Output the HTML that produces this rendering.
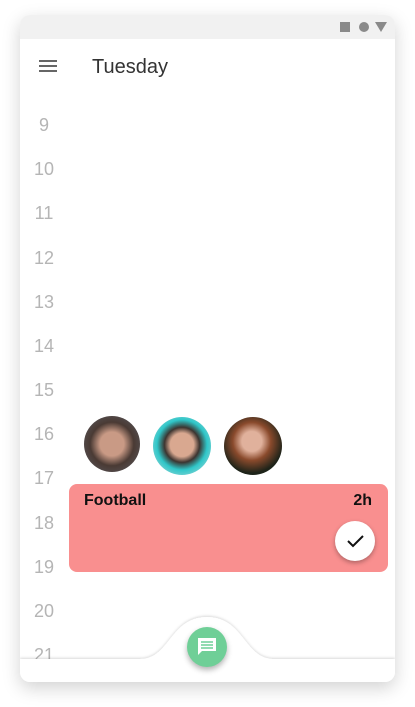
<!DOCTYPE html>
<html><head><style>
body{margin:0;width:415px;height:707px;background:#fff;font-family:"Liberation Sans",sans-serif;position:relative;overflow:hidden}
.frame{position:absolute;left:20px;top:15px;width:375px;height:667px;background:#fff;border-radius:10px;box-shadow:0 6px 18px rgba(0,0,0,.18);overflow:hidden}
.sb{height:24px;background:#f1f1f1;position:relative}
.num{position:absolute;width:50px;text-align:center;left:-1px;color:#b5b5b5;font-size:18px}
.av{position:absolute;border-radius:50%;overflow:hidden}
</style></head><body>
<div class="frame">
<div class="sb">
<div style="position:absolute;left:320px;top:7px;width:10px;height:10px;background:#8a8a8a"></div>
<div style="position:absolute;left:339px;top:7px;width:10px;height:10px;border-radius:50%;background:#8a8a8a"></div>
<div style="position:absolute;left:355px;top:7px;width:0;height:0;border-left:6px solid transparent;border-right:6px solid transparent;border-top:10px solid #8a8a8a"></div>
</div>
<div style="position:absolute;left:19px;top:45px;width:18px;height:2px;background:#666;box-shadow:0 5px 0 #666,0 10px 0 #666"></div>
<div style="position:absolute;left:72px;top:41px;font-size:20px;color:#333">Tuesday</div>
<div class="num" style="top:100px">9</div>
<div class="num" style="top:144px">10</div>
<div class="num" style="top:188px">11</div>
<div class="num" style="top:233px">12</div>
<div class="num" style="top:277px">13</div>
<div class="num" style="top:321px">14</div>
<div class="num" style="top:365px">15</div>
<div class="num" style="top:409px">16</div>
<div class="num" style="top:453px">17</div>
<div class="num" style="top:498px">18</div>
<div class="num" style="top:542px">19</div>
<div class="num" style="top:586px">20</div>
<div class="num" style="top:630px">21</div>
<div class="av" style="left:64px;top:401px;width:56px;height:56px;background:radial-gradient(circle at 50% 50%,#c99a85 0 30%,#4a3a34 55%,#5c5f66)"></div>
<div class="av" style="left:133px;top:402px;width:58px;height:58px;background:radial-gradient(circle at 50% 48%,#d9a890 0 28%,#3c3430 42%,#2fc7c9 60%,#d8dcdc)"></div>
<div class="av" style="left:204px;top:402px;width:58px;height:58px;background:radial-gradient(circle at 48% 42%,#e0b19c 0 22%,#8a4a2c 42%,#1d2319 70%)"></div>
<div style="position:absolute;left:49px;top:469px;width:319px;height:88px;background:#f98f8f;border-radius:8px">
<div style="position:absolute;left:15px;top:8px;font-size:16px;font-weight:bold;color:#111">Football</div>
<div style="position:absolute;right:16px;top:8px;font-size:16px;font-weight:bold;color:#111">2h</div>
<div style="position:absolute;left:266px;top:37px;width:40px;height:40px;border-radius:50%;background:#fff;box-shadow:0 2px 5px rgba(0,0,0,.3)">
<svg width="40" height="40" viewBox="0 0 40 40"><path d="M13 20l5 5 10-10" fill="none" stroke="#111" stroke-width="2"/></svg></div>
</div>
<svg style="position:absolute;left:0;top:590px" width="375" height="77" viewBox="0 0 375 77">
<defs><filter id="f" x="-10%" y="-30%" width="120%" height="160%"><feDropShadow dx="0" dy="-1" stdDeviation="1.2" flood-color="#000" flood-opacity=".15"/></filter></defs>
<path d="M0 54 H120 C150 54 150 12 187 12 C224 12 224 54 254 54 H375 V77 H0Z" fill="#fff" filter="url(#f)"/>
</svg>
<div style="position:absolute;left:167px;top:612px;width:40px;height:40px;border-radius:50%;background:#6fcf97;box-shadow:0 3px 6px rgba(0,0,0,.3)">
<svg width="40" height="40" viewBox="0 0 40 40"><path d="M11 11h18v13H15l-4 4z" fill="#fff"/><path d="M14 15h12M14 18h12M14 21h12" stroke="#6fcf97" stroke-width="1.5"/></svg></div>
</div>
</body></html>
